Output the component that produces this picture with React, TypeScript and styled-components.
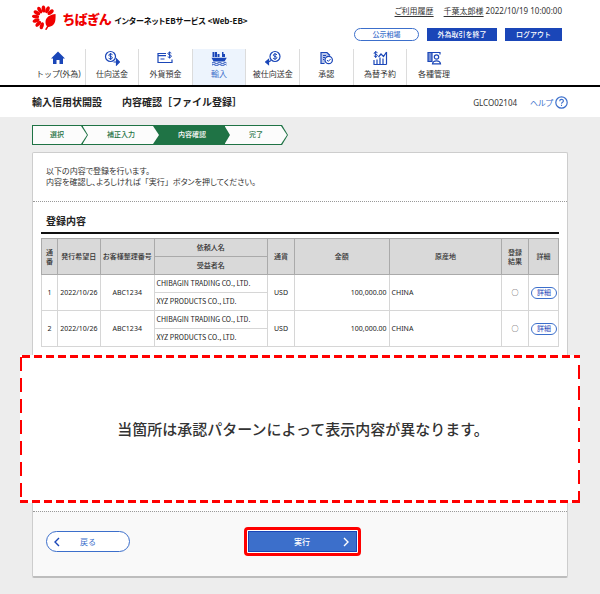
import React from "react";
import styled, { createGlobalStyle, css } from "styled-components";

const blue = "#1a46b8";
const softBlue = "#3c6fcb";
const green = "#1f7345";
const line = "#d6d6d6";

const GlobalStyle = createGlobalStyle`
  *, *::before, *::after { box-sizing: border-box; }
  body {
    margin: 0;
    background: #ededed;
    color: #333;
    font-family: "Noto Sans", "Noto Sans CJK JP", sans-serif;
    font-size: 8px;
    line-height: 11px;
  }
  button { font: inherit; cursor: pointer; }
  a { color: inherit; }
`;

const Header = styled.header`
  display: flex;
  justify-content: space-between;
  align-items: flex-start;
  height: 49px;
  padding: 5px 38px 0 32px;
  background: #fff;
`;

const Brand = styled.a`
  display: flex;
  align-items: center;
  color: #111;
  text-decoration: none;
  white-space: nowrap;
`;

const BrandName = styled.span`
  margin: 2px 3px 0 7px;
  color: #f00000;
  font-family: "Noto Sans CJK JP", sans-serif;
  font-size: 13px;
  font-weight: 900;
  line-height: 16px;
  font-feature-settings: "palt";
`;

const BrandService = styled.span`
  margin-top: 5px;
  font-family: "Noto Sans CJK JP", sans-serif;
  font-size: 8px;
  font-weight: 700;
  line-height: 12px;
  font-feature-settings: "palt";
`;

const Account = styled.div`
  display: flex;
  flex-direction: column;
  align-items: flex-end;
  gap: 12px;
  white-space: nowrap;
`;

const AccountLine = styled.div`
  display: flex;
  font-feature-settings: "palt";
  a { margin-right: 10px; text-underline-offset: 2px; }
  a + a { margin-right: 2px; }
`;

const AccountActions = styled.div`
  display: flex;
  gap: 8px;
`;

const HeaderButton = styled.button<{ $outlined?: boolean; $width: number }>`
  width: ${(p) => p.$width}px;
  height: 13px;
  padding: 0;
  border: 1px solid ${(p) => (p.$outlined ? softBlue : blue)};
  border-radius: ${(p) => (p.$outlined ? "7px" : "0")};
  background: ${(p) => (p.$outlined ? "#fff" : blue)};
  color: ${(p) => (p.$outlined ? softBlue : "#fff")};
  font-size: 7px;
  font-weight: 500;
  line-height: 11px;
`;

const Nav = styled.nav`
  display: grid;
  grid-template-columns: repeat(10, 1fr);
  padding: 0 32px;
  background: #fff;
  border-bottom: 2px solid #000;
`;

const NavItem = styled.a<{ $active?: boolean; $last?: boolean }>`
  display: flex;
  flex-direction: column;
  align-items: center;
  gap: 2px;
  height: 36px;
  padding-top: 1px;
  border-right: ${(p) => (p.$last ? "0" : "1px solid #dcdcdc")};
  background: ${(p) => (p.$active ? "#edf4fd" : "transparent")};
  color: ${(p) => (p.$active ? softBlue : "#333")};
  text-decoration: none;
  white-space: nowrap;
`;

const TitleBar = styled.div`
  display: flex;
  align-items: center;
  height: 30px;
  padding: 0 32px;
  background: #fff;
`;

const PageTitle = styled.h1`
  display: flex;
  gap: 20px;
  margin: 0;
  color: #222;
  font-size: 10px;
  font-weight: 700;
  line-height: 14px;
`;

const ScreenCode = styled.span`
  margin-left: auto;
`;

const HelpLink = styled.a`
  display: flex;
  align-items: center;
  gap: 2px;
  margin-left: 13px;
  color: ${softBlue};
  text-decoration: none;
  font-feature-settings: "palt";
`;

const Main = styled.main`
  padding: 8px 32px 16px;
`;

const Steps = styled.ol`
  display: flex;
  margin: 0 0 7px;
  padding: 0;
  list-style: none;
`;

const Step = styled.li<{ $width: number; $first: boolean; $order: number }>`
  position: relative;
  z-index: ${(p) => p.$order};
  width: ${(p) => p.$width}px;
  height: 20px;
  margin-left: ${(p) => (p.$first ? "0" : "-6px")};
  padding: 1px;
  background: ${green};
  clip-path: polygon(0 0, calc(100% - 6px) 0, 100% 50%, calc(100% - 6px) 100%, 0 100%);
`;

const StepLabel = styled.span<{ $active?: boolean; $first: boolean }>`
  display: block;
  height: 18px;
  padding: 0 6px 0 ${(p) => (p.$first ? "0" : "6px")};
  background: ${(p) => (p.$active ? green : "#fcfcfc")};
  color: ${(p) => (p.$active ? "#fff" : green)};
  clip-path: polygon(0 0, calc(100% - 6px) 0, 100% 50%, calc(100% - 6px) 100%, 0 100%);
  font-size: 7px;
  font-weight: 500;
  line-height: 18px;
  text-align: center;
`;

const Card = styled.section`
  border: 1px solid #cdcdcd;
  border-bottom: 2px solid #bdbdbd;
  border-radius: 2px;
  background: #fff;
`;

const Intro = styled.p`
  margin: 0;
  padding: 12px 13px 14px;
  border-bottom: 1px dotted #999;
  font-feature-settings: "palt";
`;

const ButtonName = styled.span`
  font-feature-settings: normal;
`;

const Section = styled.div`
  padding: 12px 8px 8px;
`;

const SectionTitle = styled.h2`
  margin: 0 0 4px;
  padding: 0 5px 4px;
  border-bottom: 2px solid #111;
  color: #222;
  font-size: 10px;
  font-weight: 700;
  line-height: 14px;
`;

const Table = styled.table`
  width: 100%;
  border-collapse: collapse;
  table-layout: fixed;
  font-size: 7px;
  line-height: 9px;
`;

const HeadCell = styled.th`
  height: 18px;
  padding: 0;
  border: 1px solid #aaa;
  background: #d9d9d9;
  font-weight: 500;
`;

const Cell = styled.td<{ $align?: "left" | "right" }>`
  height: 18px;
  padding: 0 2px;
  border: 1px solid ${line};
  color: #222;
  text-align: ${(p) => p.$align ?? "center"};
  white-space: nowrap;
`;

const NameCell = styled(Cell)`
  font-family: "Noto Sans CJK JP", sans-serif;
`;

const DetailButton = styled.button`
  display: block;
  width: 26px;
  height: 12px;
  margin: 0 auto;
  padding: 0;
  border: 1px solid ${softBlue};
  border-radius: 6px;
  background: #fff;
  color: ${blue};
  font-size: 7px;
  line-height: 9px;
`;

const hDash = css`repeating-linear-gradient(90deg, #f00 0 8px, transparent 8px 12px)`;
const vDash = css`repeating-linear-gradient(180deg, #f00 0 14px, transparent 14px 21px)`;

const Notice = styled.p`
  position: relative;
  display: flex;
  align-items: center;
  justify-content: center;
  height: 148px;
  margin: 0 -13px;
  padding-left: 6px;
  background:
    ${hDash} 2px 0 / 100% 3px no-repeat,
    ${hDash} 0 100% / 100% 3px no-repeat,
    ${vDash} 0 2px / 2px 100% no-repeat,
    ${vDash} 100% 10px / 2px 100% no-repeat,
    #fff;
  font-family: "Noto Sans CJK JP", sans-serif;
  font-size: 15px;
  font-weight: 500;
  line-height: 20px;
`;

const Footer = styled.div`
  display: grid;
  grid-template-columns: 1fr auto 1fr;
  align-items: center;
  margin-top: 8px;
  padding: 15px 9px 20px 13px;
  border-top: 1px dotted #999;
  background: #f9f9f9;
`;

const BackButton = styled.button`
  display: grid;
  grid-template-columns: 12px 1fr 12px;
  align-items: center;
  width: 84px;
  height: 21px;
  padding: 0 4px;
  border: 1px solid ${softBlue};
  border-radius: 11px;
  background: #fff;
  color: ${softBlue};
`;

const Highlight = styled.div`
  padding: 1px;
  border: 3px solid #f00;
  border-radius: 4px;
  background: #fff;
`;

const SubmitButton = styled.button`
  display: grid;
  grid-template-columns: 12px 1fr 12px;
  align-items: center;
  width: 109px;
  height: 21px;
  padding: 0 4px;
  border: 1px solid ${blue};
  background: ${softBlue};
  color: #fff;
  font-weight: 500;
  svg { grid-column: 3; }
  span { grid-column: 2; }
`;

const LogoMark = () => (
  <svg width="24" height="26" viewBox="0 0 24 26" aria-hidden="true">
    <g fill="#f00000">
      {[-165, -138, -111, -84, -57, -30, -3, 24, 51].map((a) => (
        <ellipse key={a} cx="12" cy="4" rx="1.900" ry="3.600" transform={`rotate(${a} 12 12.500)`} />
      ))}
      <path d="M23.500 9c-5 .5-10 3-10 8 0 2 .6 3.300 1.500 4.300L13 24.500l1.500.5 1.800-3c4-.5 6.500-3 7-6.500.3-2.500.4-4.500.2-6.500Z" />
    </g>
  </svg>
);

const HomeIcon = () => (
  <path d="M8 1.500 1 8.500h2V14h3.500v-4h3v4H13V8.500h2Z" fill={blue} />
);

const SendIcon = () => (
  <g fill="none" stroke={blue} strokeWidth="1.200">
    <circle cx="6.500" cy="6.500" r="5" />
    <path d="M8.500 4.700C7 3.500 4.600 4 4.800 5.300c.2 1.400 3.500.8 3.600 2.400.1 1.300-2.300 1.700-3.800.5M6.600 3v7" strokeWidth="1" />
    <path d="M9.500 12h4M12.500 9v6l3-3Z" fill={blue} />
  </g>
);

const DepositIcon = () => (
  <g fill="none" stroke={blue} strokeWidth="1.200">
    <path d="M9 3.500H1v9h14V9.500" />
    <path d="M1 5.700h8M3.500 9h4" />
    <path d="M14.300 3.200c-1.300-1.200-3.500-.7-3.400.6.200 1.300 3.500.8 3.500 2.400 0 1.300-2.300 1.600-3.700.6M12.600 1.500v7" strokeWidth="1" />
  </g>
);

const ShipIcon = () => (
  <g fill={blue}>
    <path d="M1.500 2h2v5h-2zM4 2h2v5H4zM6.500 4h2v3h-2zM11 2h1.500v2H14v3h-3z" />
    <path d="M.5 7.800h15.300L13.500 11.500H2.500Z" />
    <path d="M1 13q1.500-1.200 3 0t3 0 3 0 3 0 2.500 0M1 15q1.500-1.200 3 0t3 0 3 0 3 0 2.500 0" stroke={blue} fill="none" />
  </g>
);

const ReceiveIcon = () => (
  <g fill="none" stroke={blue} strokeWidth="1.200">
    <circle cx="10" cy="6.500" r="5" />
    <path d="M12 4.700c-1.500-1.200-3.900-.7-3.700.6.200 1.400 3.500.8 3.600 2.400.1 1.300-2.300 1.700-3.800.5M10 3v7" strokeWidth="1" />
    <path d="M3.500 9.500v5l-3-2.500ZM3.500 12 6 10.500" fill={blue} />
  </g>
);

const ApproveIcon = () => (
  <g fill="none" stroke={blue} strokeWidth="1.200">
    <path d="M6.500 13.500H3v-11h6l3 3" fill={blue} fillOpacity="0.300" />
    <path d="M5 5.500h3M5 7.500h2M5 9.500h1" />
    <circle cx="10.700" cy="10" r="3.700" fill="#fff" />
    <path d="m9 10 1.300 1.400L12.600 9" strokeWidth="1" />
  </g>
);

const RateIcon = () => (
  <g fill="none" stroke={blue} strokeWidth="1.200">
    <path d="M5.500 2.700c-1.500-1-3.500-.6-3.400.6.200 1.200 3.200.7 3.300 2.100 0 1.300-2.100 1.500-3.500.5M3.700 1v7" strokeWidth="1" />
    <path d="M2 10v4.500M5 9.500v5M8 7.500v7M11 8.500v6M14.500 2v12.500M1.500 14.500h13M6.500 7 9 4l2.500 2.500 3-4.500" />
  </g>
);

const AdminIcon = () => (
  <g fill="none" stroke={blue} strokeWidth="1.200">
    <path d="M6 11.500H2v-9h4Z" fill={blue} fillOpacity="0.600" />
    <path d="M6 2.500h8v2" />
    <circle cx="10.500" cy="7" r="2.200" />
    <path d="M6.500 13.800c.5-4 7.500-4 8 0Z" />
  </g>
);

const menu = [
  { label: "トップ(外為)", Icon: HomeIcon },
  { label: "仕向送金", Icon: SendIcon },
  { label: "外貨預金", Icon: DepositIcon },
  { label: "輸入", Icon: ShipIcon, active: true },
  { label: "被仕向送金", Icon: ReceiveIcon },
  { label: "承認", Icon: ApproveIcon },
  { label: "為替予約", Icon: RateIcon },
  { label: "各種管理", Icon: AdminIcon },
];

const steps = [
  { label: "選択", width: 56 },
  { label: "補正入力", width: 78 },
  { label: "内容確認", width: 76, active: true },
  { label: "完了", width: 64 },
];

const columns = [16, 43, 54, 114, 27, 95, 113, 27, 30];
const columnTotal = columns.reduce((a, b) => a + b, 0);

const Col = styled.col<{ $share: number }>`
  width: ${(p) => p.$share}%;
`;

const rows = [1, 2].map((no) => ({
  no,
  date: "2022/10/26",
  ref: "ABC1234",
  applicant: "CHIBAGIN TRADING CO., LTD.",
  beneficiary: "XYZ PRODUCTS CO., LTD.",
  currency: "USD",
  amount: "100,000.00",
  origin: "CHINA",
}));

export default function App() {
  return (
    <>
      <GlobalStyle />
      <Header>
        <Brand href="#">
          <LogoMark />
          <BrandName>ちばぎん</BrandName>
          <BrandService>インターネットEBサービス &lt;Web-EB&gt;</BrandService>
        </Brand>
        <Account>
          <AccountLine>
            <a href="#history">ご利用履歴</a>
            <a href="#user">千葉太郎様</a>
            <span>2022/10/19 10:00:00</span>
          </AccountLine>
          <AccountActions>
            <HeaderButton $outlined $width={65}>公示相場</HeaderButton>
            <HeaderButton $width={70}>外為取引を終了</HeaderButton>
            <HeaderButton $width={57}>ログアウト</HeaderButton>
          </AccountActions>
        </Account>
      </Header>
      <Nav>
        {menu.map(({ label, Icon, active }, i) => (
          <NavItem key={label} href="#" $active={active} $last={i === menu.length - 1}>
            <svg width="16" height="16" viewBox="0 0 16 16" aria-hidden="true">
              <Icon />
            </svg>
            {label}
          </NavItem>
        ))}
      </Nav>
      <TitleBar>
        <PageTitle>
          <span>輸入信用状開設</span>
          <span>内容確認［ファイル登録］</span>
        </PageTitle>
        <ScreenCode>GLCO02104</ScreenCode>
        <HelpLink href="#help">
          ヘルプ
          <svg width="13" height="13" viewBox="0 0 13 13" fill="none" stroke={softBlue} aria-hidden="true">
            <circle cx="6.500" cy="6.500" r="5.700" strokeWidth="1.200" />
            <path d="M4.700 5.200c0-2.400 3.700-2.300 3.700-.2 0 1.300-1.900 1.300-1.900 2.700M6.500 8.700v1.200" strokeWidth="1.100" />
          </svg>
        </HelpLink>
      </TitleBar>
      <Main>
        <Steps>
          {steps.map(({ label, width, active }, i) => (
            <Step key={label} $width={width} $first={i === 0} $order={steps.length - i}>
              <StepLabel $active={active} $first={i === 0}>{label}</StepLabel>
            </Step>
          ))}
        </Steps>
        <Card>
          <Intro>
            以下の内容で登録を行います。
            <br />
            内容を確認し、よろしければ<ButtonName>「実行」</ButtonName>ボタンを押してください。
          </Intro>
          <Section>
            <SectionTitle>登録内容</SectionTitle>
            <Table>
              <colgroup>
                {columns.map((w, i) => (
                  <Col key={i} $share={(w / columnTotal) * 100} />
                ))}
              </colgroup>
              <thead>
                <tr>
                  <HeadCell rowSpan={2}>通<br />番</HeadCell>
                  <HeadCell rowSpan={2}>発行希望日</HeadCell>
                  <HeadCell rowSpan={2}>お客様整理番号</HeadCell>
                  <HeadCell>依頼人名</HeadCell>
                  <HeadCell rowSpan={2}>通貨</HeadCell>
                  <HeadCell rowSpan={2}>金額</HeadCell>
                  <HeadCell rowSpan={2}>原産地</HeadCell>
                  <HeadCell rowSpan={2}>登録<br />結果</HeadCell>
                  <HeadCell rowSpan={2}>詳細</HeadCell>
                </tr>
                <tr>
                  <HeadCell>受益者名</HeadCell>
                </tr>
              </thead>
              <tbody>
                {rows.map((r) => (
                  <React.Fragment key={r.no}>
                    <tr>
                      <Cell rowSpan={2}>{r.no}</Cell>
                      <Cell rowSpan={2}>{r.date}</Cell>
                      <Cell rowSpan={2}>{r.ref}</Cell>
                      <NameCell $align="left">{r.applicant}</NameCell>
                      <Cell rowSpan={2}>{r.currency}</Cell>
                      <Cell rowSpan={2} $align="right">{r.amount}</Cell>
                      <Cell rowSpan={2} $align="left">{r.origin}</Cell>
                      <Cell rowSpan={2}>○</Cell>
                      <Cell rowSpan={2}>
                        <DetailButton>詳細</DetailButton>
                      </Cell>
                    </tr>
                    <tr>
                      <NameCell $align="left">{r.beneficiary}</NameCell>
                    </tr>
                  </React.Fragment>
                ))}
              </tbody>
            </Table>
          </Section>
          <Notice>当箇所は承認パターンによって表示内容が異なります。</Notice>
          <Footer>
            <BackButton>
              <svg width="12" height="12" viewBox="0 0 12 12" fill="none" stroke={blue} strokeWidth="1.400" aria-hidden="true">
                <path d="M8 2 4 6l4 4" />
              </svg>
              <span>戻る</span>
            </BackButton>
            <Highlight>
              <SubmitButton>
                <span>実行</span>
                <svg width="12" height="12" viewBox="0 0 12 12" fill="none" stroke="#fff" strokeWidth="1.400" aria-hidden="true">
                  <path d="m4 2 4 4-4 4" />
                </svg>
              </SubmitButton>
            </Highlight>
          </Footer>
        </Card>
      </Main>
    </>
  );
}
